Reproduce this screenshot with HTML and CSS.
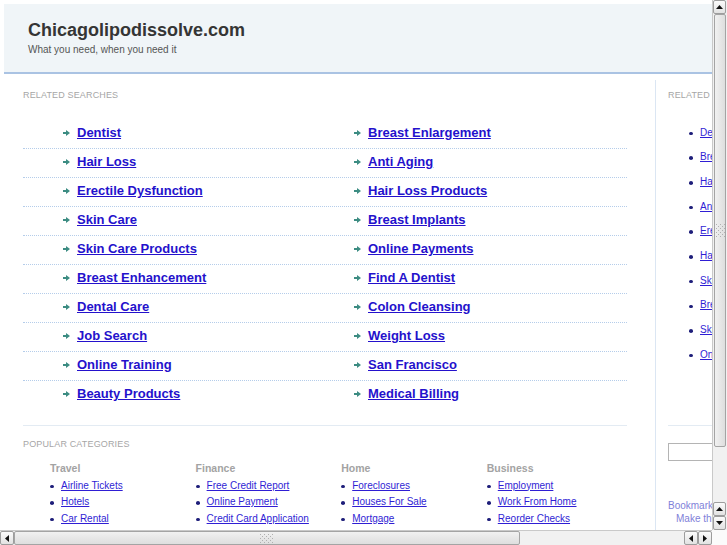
FILE: index.html
```html
<!DOCTYPE html>
<html>
<head>
<meta charset="utf-8">
<title>Chicagolipodissolve.com</title>
<link rel="stylesheet" href="styles.css">
</head>
<body>
<div class="page">
  <header class="header">
    <h1 class="title">Chicagolipodissolve.com</h1>
    <p class="tagline">What you need, when you need it</p>
  </header>
  <div class="main">
    <div class="content">
      <h2 class="label">Related Searches</h2>
      <ul class="searches">
        <li class="srow"><div class="sitem"><svg class="arr" width="7" height="6" viewBox="0 0 7 6"><polygon points="0,2 3,2 3,0 7,3 3,6 3,4 0,4"/></svg><a href="#">Dentist</a></div><div class="sitem"><svg class="arr" width="7" height="6" viewBox="0 0 7 6"><polygon points="0,2 3,2 3,0 7,3 3,6 3,4 0,4"/></svg><a href="#">Breast Enlargement</a></div></li>
        <li class="srow"><div class="sitem"><svg class="arr" width="7" height="6" viewBox="0 0 7 6"><polygon points="0,2 3,2 3,0 7,3 3,6 3,4 0,4"/></svg><a href="#">Hair Loss</a></div><div class="sitem"><svg class="arr" width="7" height="6" viewBox="0 0 7 6"><polygon points="0,2 3,2 3,0 7,3 3,6 3,4 0,4"/></svg><a href="#">Anti Aging</a></div></li>
        <li class="srow"><div class="sitem"><svg class="arr" width="7" height="6" viewBox="0 0 7 6"><polygon points="0,2 3,2 3,0 7,3 3,6 3,4 0,4"/></svg><a href="#">Erectile Dysfunction</a></div><div class="sitem"><svg class="arr" width="7" height="6" viewBox="0 0 7 6"><polygon points="0,2 3,2 3,0 7,3 3,6 3,4 0,4"/></svg><a href="#">Hair Loss Products</a></div></li>
        <li class="srow"><div class="sitem"><svg class="arr" width="7" height="6" viewBox="0 0 7 6"><polygon points="0,2 3,2 3,0 7,3 3,6 3,4 0,4"/></svg><a href="#">Skin Care</a></div><div class="sitem"><svg class="arr" width="7" height="6" viewBox="0 0 7 6"><polygon points="0,2 3,2 3,0 7,3 3,6 3,4 0,4"/></svg><a href="#">Breast Implants</a></div></li>
        <li class="srow"><div class="sitem"><svg class="arr" width="7" height="6" viewBox="0 0 7 6"><polygon points="0,2 3,2 3,0 7,3 3,6 3,4 0,4"/></svg><a href="#">Skin Care Products</a></div><div class="sitem"><svg class="arr" width="7" height="6" viewBox="0 0 7 6"><polygon points="0,2 3,2 3,0 7,3 3,6 3,4 0,4"/></svg><a href="#">Online Payments</a></div></li>
        <li class="srow"><div class="sitem"><svg class="arr" width="7" height="6" viewBox="0 0 7 6"><polygon points="0,2 3,2 3,0 7,3 3,6 3,4 0,4"/></svg><a href="#">Breast Enhancement</a></div><div class="sitem"><svg class="arr" width="7" height="6" viewBox="0 0 7 6"><polygon points="0,2 3,2 3,0 7,3 3,6 3,4 0,4"/></svg><a href="#">Find A Dentist</a></div></li>
        <li class="srow"><div class="sitem"><svg class="arr" width="7" height="6" viewBox="0 0 7 6"><polygon points="0,2 3,2 3,0 7,3 3,6 3,4 0,4"/></svg><a href="#">Dental Care</a></div><div class="sitem"><svg class="arr" width="7" height="6" viewBox="0 0 7 6"><polygon points="0,2 3,2 3,0 7,3 3,6 3,4 0,4"/></svg><a href="#">Colon Cleansing</a></div></li>
        <li class="srow"><div class="sitem"><svg class="arr" width="7" height="6" viewBox="0 0 7 6"><polygon points="0,2 3,2 3,0 7,3 3,6 3,4 0,4"/></svg><a href="#">Job Search</a></div><div class="sitem"><svg class="arr" width="7" height="6" viewBox="0 0 7 6"><polygon points="0,2 3,2 3,0 7,3 3,6 3,4 0,4"/></svg><a href="#">Weight Loss</a></div></li>
        <li class="srow"><div class="sitem"><svg class="arr" width="7" height="6" viewBox="0 0 7 6"><polygon points="0,2 3,2 3,0 7,3 3,6 3,4 0,4"/></svg><a href="#">Online Training</a></div><div class="sitem"><svg class="arr" width="7" height="6" viewBox="0 0 7 6"><polygon points="0,2 3,2 3,0 7,3 3,6 3,4 0,4"/></svg><a href="#">San Francisco</a></div></li>
        <li class="srow"><div class="sitem"><svg class="arr" width="7" height="6" viewBox="0 0 7 6"><polygon points="0,2 3,2 3,0 7,3 3,6 3,4 0,4"/></svg><a href="#">Beauty Products</a></div><div class="sitem"><svg class="arr" width="7" height="6" viewBox="0 0 7 6"><polygon points="0,2 3,2 3,0 7,3 3,6 3,4 0,4"/></svg><a href="#">Medical Billing</a></div></li>
      </ul>
      <div class="popular">
        <h2 class="label">Popular Categories</h2>
        <div class="cats">
          <div class="cat">
            <h3 class="cat-title">Travel</h3>
            <ul class="dots">
              <li><a href="#">Airline Tickets</a></li>
              <li><a href="#">Hotels</a></li>
              <li><a href="#">Car Rental</a></li>
            </ul>
          </div>
          <div class="cat">
            <h3 class="cat-title">Finance</h3>
            <ul class="dots">
              <li><a href="#">Free Credit Report</a></li>
              <li><a href="#">Online Payment</a></li>
              <li><a href="#">Credit Card Application</a></li>
            </ul>
          </div>
          <div class="cat">
            <h3 class="cat-title">Home</h3>
            <ul class="dots">
              <li><a href="#">Foreclosures</a></li>
              <li><a href="#">Houses For Sale</a></li>
              <li><a href="#">Mortgage</a></li>
            </ul>
          </div>
          <div class="cat">
            <h3 class="cat-title">Business</h3>
            <ul class="dots">
              <li><a href="#">Employment</a></li>
              <li><a href="#">Work From Home</a></li>
              <li><a href="#">Reorder Checks</a></li>
            </ul>
          </div>
        </div>
      </div>
    </div>
    <aside class="side">
      <h2 class="label">Related Searches</h2>
      <ul class="dots side-list">
        <li><a href="#">Dentist</a></li>
        <li><a href="#">Breast Enlargement</a></li>
        <li><a href="#">Hair Loss</a></li>
        <li><a href="#">Anti Aging</a></li>
        <li><a href="#">Erectile Dysfunction</a></li>
        <li><a href="#">Hair Loss Products</a></li>
        <li><a href="#">Skin Care</a></li>
        <li><a href="#">Breast Implants</a></li>
        <li><a href="#">Skin Care Products</a></li>
        <li><a href="#">Online Payments</a></li>
      </ul>
      <div class="side-search">
        <input class="search-box" type="text">
      </div>
      <div class="side-links">
        <a class="bm" href="#">Bookmark this page</a>
        <a class="hp" href="#">Make this your homepage</a>
      </div>
    </aside>
  </div>
</div>

<div class="vscroll">
  <div class="sbtn"><svg width="7" height="4" viewBox="0 0 7 4"><polygon points="0,4 3.5,0 7,4"/></svg></div>
  <div class="thumb vthumb"><svg class="grip" width="9" height="14" viewBox="0 0 9 14"><g fill="#b0b0b0"><rect x="0" y="0" width="1" height="1"/><rect x="4" y="0" width="1" height="1"/><rect x="8" y="0" width="1" height="1"/><rect x="2" y="2" width="1" height="1"/><rect x="6" y="2" width="1" height="1"/><rect x="0" y="4" width="1" height="1"/><rect x="4" y="4" width="1" height="1"/><rect x="8" y="4" width="1" height="1"/><rect x="2" y="6" width="1" height="1"/><rect x="6" y="6" width="1" height="1"/><rect x="0" y="8" width="1" height="1"/><rect x="4" y="8" width="1" height="1"/><rect x="8" y="8" width="1" height="1"/><rect x="2" y="10" width="1" height="1"/><rect x="6" y="10" width="1" height="1"/><rect x="0" y="12" width="1" height="1"/><rect x="4" y="12" width="1" height="1"/><rect x="8" y="12" width="1" height="1"/></g></svg></div>
  <div class="track"></div>
  <div class="sbtn"><svg width="7" height="4" viewBox="0 0 7 4"><polygon points="0,4 3.5,0 7,4"/></svg></div>
  <div class="sbtn"><svg width="7" height="4" viewBox="0 0 7 4"><polygon points="0,0 7,0 3.5,4"/></svg></div>
</div>
<div class="hscroll">
  <div class="sbtn"><svg width="4" height="7" viewBox="0 0 4 7"><polygon points="4,0 4,7 0,3.5"/></svg></div>
  <div class="thumb hthumb"><svg class="grip" width="14" height="9" viewBox="0 0 14 9"><g fill="#b0b0b0"><rect x="0" y="0" width="1" height="1"/><rect x="0" y="4" width="1" height="1"/><rect x="0" y="8" width="1" height="1"/><rect x="2" y="2" width="1" height="1"/><rect x="2" y="6" width="1" height="1"/><rect x="4" y="0" width="1" height="1"/><rect x="4" y="4" width="1" height="1"/><rect x="4" y="8" width="1" height="1"/><rect x="6" y="2" width="1" height="1"/><rect x="6" y="6" width="1" height="1"/><rect x="8" y="0" width="1" height="1"/><rect x="8" y="4" width="1" height="1"/><rect x="8" y="8" width="1" height="1"/><rect x="10" y="2" width="1" height="1"/><rect x="10" y="6" width="1" height="1"/><rect x="12" y="0" width="1" height="1"/><rect x="12" y="4" width="1" height="1"/><rect x="12" y="8" width="1" height="1"/></g></svg></div>
  <div class="track"></div>
  <div class="sbtn"><svg width="4" height="7" viewBox="0 0 4 7"><polygon points="4,0 4,7 0,3.5"/></svg></div>
  <div class="sbtn"><svg width="4" height="7" viewBox="0 0 4 7"><polygon points="0,0 0,7 4,3.5"/></svg></div>
</div>
<div class="corner"></div>
</body>
</html>
```

FILE: styles.css
```css
html, body {
  margin: 0;
  padding: 0;
  overflow: hidden;
  background: #ffffff;
  font-family: "Liberation Sans", Arial, sans-serif;
}

.page {
  width: 940px;
  padding: 4px 0 0 4px;
}

/* Header */
.header {
  height: 70px;
  box-sizing: border-box;
  padding: 15px 0 0 24px;
  background: #f0f5f8;
  border-bottom: 2px solid #aac3e3;
}

.title {
  margin: 0;
  font-size: 18px;
  line-height: 22px;
  font-weight: bold;
  color: #353535;
}

.tagline {
  margin: 3px 0 0 0;
  font-size: 10px;
  line-height: 12px;
  color: #555555;
}

/* Main area */
.main {
  display: flex;
  margin-top: 6px;
}

.content {
  width: 651px;
  flex: none;
  box-sizing: border-box;
  padding: 0 28px 0 19px;
}

.label {
  margin: 0;
  padding-top: 10px;
  font-size: 9px;
  line-height: 11px;
  font-weight: normal;
  text-transform: uppercase;
  letter-spacing: 0.15px;
  color: #a6a6a6;
}

/* Related searches */
.searches {
  list-style: none;
  margin: 19px 0 0 0;
  padding: 0;
}

.srow {
  display: grid;
  grid-template-columns: 291px 1fr;
  padding-bottom: 2px;
  border-bottom: 1px dotted #b5cdea;
}

.srow:last-child {
  border-bottom: none;
}

.sitem {
  display: flex;
  align-items: center;
  gap: 7px;
  height: 26px;
  padding-left: 40px;
}

.arr {
  fill: #3c8c82;
  flex: none;
}

.sitem a {
  font-size: 13px;
  line-height: 26px;
  font-weight: bold;
  color: #2411cc;
  text-decoration: underline;
}

/* Popular categories */
.popular {
  margin-top: 16px;
  border-top: 1px solid #e3ebf3;
  padding-top: 3px;
}

.cats {
  display: grid;
  grid-template-columns: repeat(4, 145.6px);
  margin-top: 12px;
  padding-left: 27px;
}

.cat-title {
  margin: 0 0 2.5px 0;
  font-size: 10.5px;
  line-height: 13px;
  font-weight: bold;
  color: #a3a3a3;
}

.dots {
  list-style: none;
  margin: 0;
  padding: 0;
}

.dots li {
  display: flex;
  align-items: center;
  font-size: 10px;
  line-height: 16.5px;
}

.dots li::before {
  content: "";
  display: block;
  width: 4px;
  height: 3.5px;
  margin: 1px 7px 0 0;
  border-radius: 50%;
  background: #1e1e7a;
  flex: none;
}

.dots a {
  color: #2f1ed4;
  text-decoration: underline;
  white-space: nowrap;
}

/* Sidebar */
.side {
  flex: 1;
  border-left: 1px solid #dbe6f3;
  padding: 0 0 40px 12px;
  min-height: 470px;
}

.side-list {
  margin-top: 19.5px;
  padding-left: 21px;
}

.side-list li {
  line-height: 24.7px;
}

.side-search {
  margin-top: 57px;
  border-top: 1px solid #e3ebf3;
  padding-top: 17px;
}

.search-box {
  display: block;
  width: 180px;
  height: 18px;
  box-sizing: border-box;
  margin: 0;
  border: 1px solid #b4b4b4;
  padding: 0;
  background: #fff;
}

.side-links {
  margin-top: 38px;
  font-size: 10px;
  line-height: 13px;
}

.side-links a {
  display: block;
  color: #7f7fd9;
  text-decoration: none;
  white-space: nowrap;
}

.side-links .hp {
  margin-left: 8px;
}

/* Fake browser scrollbars (overlay the page) */
.vscroll {
  position: fixed;
  top: 0;
  right: 0;
  width: 15px;
  height: 530px;
  box-sizing: border-box;
  display: flex;
  flex-direction: column;
  background: #f1f1f1;
  border-left: 1px solid #c9c9c9;
}

.hscroll {
  position: fixed;
  left: 0;
  bottom: 0;
  width: 712px;
  height: 15px;
  box-sizing: border-box;
  display: flex;
  background: #f1f1f1;
  border-top: 1px solid #c9c9c9;
}

.corner {
  position: fixed;
  right: 0;
  bottom: 0;
  width: 15px;
  height: 15px;
  background: #fbfbfb;
}

.sbtn {
  flex: none;
  width: 14px;
  height: 14px;
  box-sizing: border-box;
  display: flex;
  align-items: center;
  justify-content: center;
  background: linear-gradient(#fbfbfb, #e2e2e2);
  border: 1px solid #9d9d9d;
  border-radius: 2px;
  fill: #111;
}

.thumb {
  flex: none;
  box-sizing: border-box;
  display: flex;
  align-items: center;
  justify-content: center;
  border: 1px solid #a4a4a4;
  border-radius: 2px;
}

.vthumb {
  height: 433px;
  margin: 0 1px;
  background: linear-gradient(90deg, #f1f1f1, #dedede);
}

.hthumb {
  width: 506px;
  margin: 0;
  background: linear-gradient(#f1f1f1, #dedede);
}

.track {
  flex: 1;
}

.vscroll .sbtn {
  width: 13px;
}

.hscroll .sbtn {
  height: 14px;
}
```
